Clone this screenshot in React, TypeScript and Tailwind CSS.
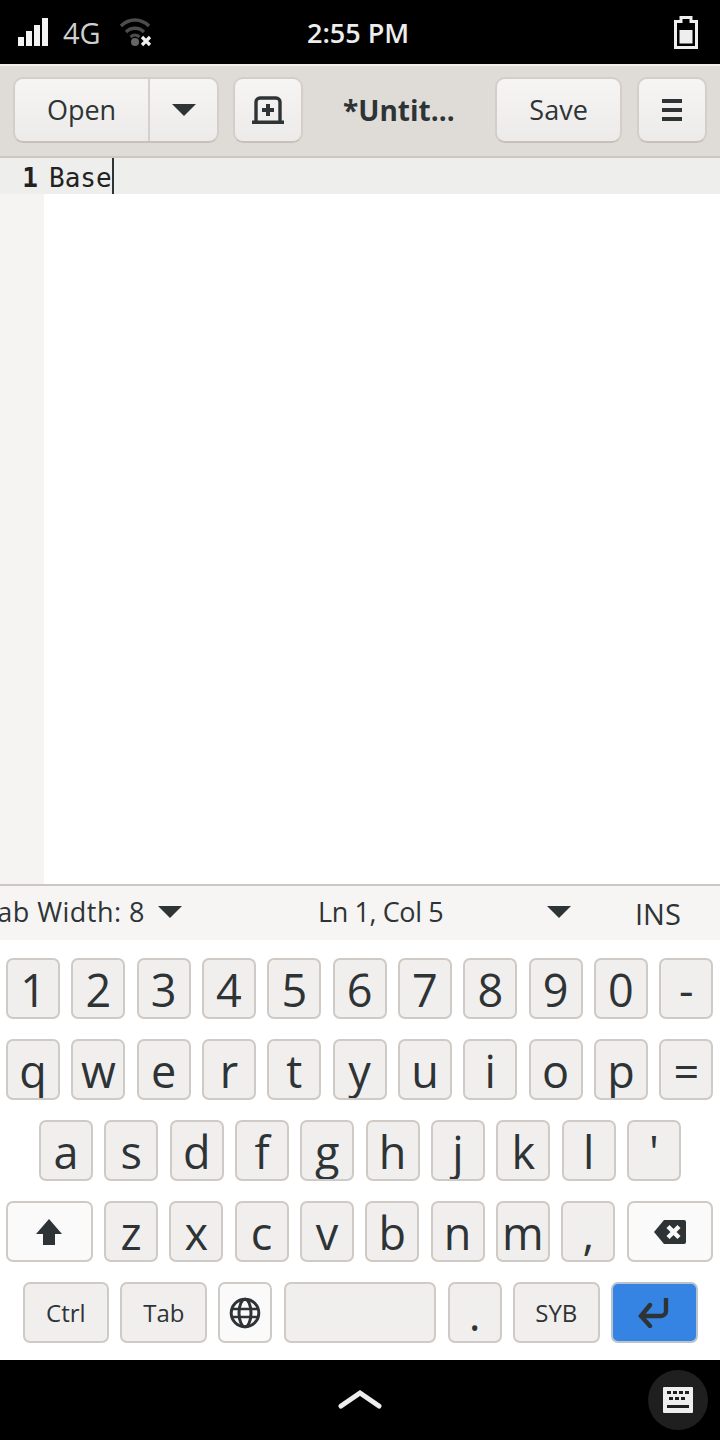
import React from "react";

const keyBase =
  "flex h-[61px] shrink-0 justify-center overflow-hidden rounded-[7px] border-2 text-[#2e3436]";
const plain = "border-[#cfcac5] bg-[#f1efee]";
const light = "border-[#cfcac5] bg-[#fafafa]";

function Key({ label, cls = "w-[54px]" }: { label?: string; cls?: string }) {
  return (
    <div className={`${keyBase} ${plain} ${cls} items-start text-[45px] leading-[60px]`}>
      {label}
    </div>
  );
}

function Row({ keys }: { keys: string[] }) {
  return (
    <>
      {keys.map((k) => (
        <Key key={k} label={k} />
      ))}
    </>
  );
}

function Arrow() {
  return (
    <svg width="24" height="14" viewBox="0 0 24 14">
      <path d="M0 1h24L12 13z" fill="#2e3436" />
    </svg>
  );
}

function HeaderButton({ children, cls = "" }: { children: React.ReactNode; cls?: string }) {
  return (
    <div
      className={`flex h-[66px] items-center rounded-[10px] border-2 border-[#d3cec9] border-b-[#c8c1bb] bg-gradient-to-b from-[#f6f5f4] to-[#ecebe9] text-[#2e3436] ${cls}`}
    >
      {children}
    </div>
  );
}

export default function App() {
  return (
    <div className="flex h-[1440px] w-[720px] flex-col overflow-hidden bg-white font-['Open_Sans',sans-serif]">
      {/* top bar */}
      <div className="flex h-[64px] shrink-0 items-center bg-black pl-[18px] pr-[22px] text-white">
        <svg width="30" height="28" viewBox="0 0 30 28" className="mt-[-1px]">
          <path d="M0 19h6v9H0zM8 13h6v15H8zM16 7h6v21h-6zM24 0h6v28h-6z" fill="#f3f3f3" />
        </svg>
        <span className="ml-[15px] w-[38px] text-[29px] leading-none text-[#cfcfcf]">4G</span>
        <svg width="32" height="30" viewBox="0 0 32 30" className="ml-[19px] mt-[2px]">
          <path d="M1 8C9 0 21 0 29 8" fill="none" stroke="#4c4c4c" strokeWidth="3.4" />
          <path d="M6 14c5-5 13-5 18 0" fill="none" stroke="#4c4c4c" strokeWidth="3.4" />
          <path d="M10.500 19c3-2.600 6-2.600 9 0" fill="none" stroke="#4c4c4c" strokeWidth="3" />
          <circle cx="15" cy="24" r="4" fill="#666" />
          <path d="M22 19l8 8M30 19l-8 8" stroke="#f0f0f0" strokeWidth="3.2" />
        </svg>
        <span className="ml-[155px] text-[27px] font-semibold leading-none text-[#ededed]">2:55 PM</span>
        <svg width="24" height="33" viewBox="0 0 24 33" className="ml-auto">
          <path
            d="M7 1.500h10v4h5.500v26h-21v-26H7z"
            fill="none"
            stroke="#eeeeee"
            strokeWidth="3"
          />
          <path d="M5.500 14h13v13.500h-13z" fill="#eeeeee" />
        </svg>
      </div>
      <div className="h-[2px] shrink-0 bg-[#f0efed]" />

      {/* header */}
      <div className="flex h-[92px] shrink-0 items-center border-b-2 border-[#cdc7c2] bg-[#dfdcd8] pb-[2px] pl-[13px] pr-[13px]">
        <HeaderButton cls="w-[207px]">
          <span className="flex h-full w-[135px] items-center justify-center border-r-2 border-[#d5d0cb] text-[27px]">
            Open
          </span>
          <span className="flex flex-1 items-center justify-center pb-[1px]">
            <Arrow />
          </span>
        </HeaderButton>
        <HeaderButton cls="ml-[14px] w-[70px] justify-center">
          <svg width="32" height="28" viewBox="0 0 32 28">
            <path d="M4 26V6a4 4 0 0 1 4-4h16a4 4 0 0 1 4 4v20" fill="none" stroke="#2e3436" strokeWidth="3.4" />
            <path d="M0 24.500h32V28H0z" fill="#2e3436" />
            <path d="M14 8h4v4h4v4h-4v4h-4v-4h-4v-4h4z" fill="#2e3436" />
          </svg>
        </HeaderButton>
        <div className="flex w-[193px] justify-center text-[28px] font-bold text-[#2e3436]">*Untit…</div>
        <HeaderButton cls="w-[128px] justify-center text-[27px]">Save</HeaderButton>
        <HeaderButton cls="ml-[15px] w-[70px] justify-center">
          <svg width="20" height="22" viewBox="0 0 20 22">
            <path d="M0 0h20v4H0zM0 9h20v4H0zM0 18h20v4H0z" fill="#2e3436" />
          </svg>
        </HeaderButton>
      </div>

      {/* editor */}
      <div className="flex min-h-0 flex-1 flex-col bg-white font-['DejaVu_Sans_Mono',monospace] text-[26px] text-[#222]">
        <div className="flex h-[36px] shrink-0 bg-[#eeeeec] leading-[40px]">
          <span className="w-[44px] pr-[6px] text-right font-bold">1</span>
          <span className="pl-[5px]">Base</span>
          <span className="h-full w-[2px] bg-[#2e3436]" />
        </div>
        <div className="flex-1">
          <div className="h-full w-[44px] bg-[#f5f4f2]" />
        </div>
      </div>

      {/* status */}
      <div className="flex h-[56px] shrink-0 items-center overflow-hidden whitespace-nowrap border-t-2 border-[#cdc7c2] bg-[#f6f5f4] pb-[3px] text-[27px] leading-none text-[#2e3436]">
        <span className="ml-[-18px] w-[176px] shrink-0 tracking-[0.45px]">Tab Width: 8</span>
        <Arrow />
        <span className="ml-[136px] w-[229px] shrink-0 tracking-[-0.4px]">Ln 1, Col 5</span>
        <Arrow />
        <span className="ml-[64px] mt-[3px] text-[29px]">INS</span>
      </div>

      {/* keyboard */}
      <div className="flex h-[420px] shrink-0 flex-col gap-[20px] bg-white pt-[18px]">
        <div className="flex gap-[11.33px] pl-[6px]">
          <Row keys={["1", "2", "3", "4", "5", "6", "7", "8", "9", "0", "-"]} />
        </div>
        <div className="flex gap-[11.33px] pl-[6px]">
          <Row keys={["q", "w", "e", "r", "t", "y", "u", "i", "o", "p", "="]} />
        </div>
        <div className="flex gap-[11.33px] pl-[39px]">
          <Row keys={["a", "s", "d", "f", "g", "h", "j", "k", "l", "'"]} />
        </div>
        <div className="flex gap-[11.33px] pl-[6px]">
          <div className={`${keyBase} ${light} w-[86.67px] items-center`}>
            <svg width="26" height="26" viewBox="0 0 26 26">
              <path d="M13 0l13 15h-7v11H7V15H0z" fill="#2e3436" />
            </svg>
          </div>
          <Row keys={["z", "x", "c", "v", "b", "n", "m", ","]} />
          <div className={`${keyBase} ${light} w-[86.67px] items-center`}>
            <svg width="32" height="24" viewBox="0 0 32 24">
              <path d="M10 0h20a2 2 0 0 1 2 2v20a2 2 0 0 1-2 2H10L0 12z" fill="#2e3436" />
              <path d="M14 6.500l11 11M25 6.500l-11 11" stroke="#fafafa" strokeWidth="4.400" />
            </svg>
          </div>
        </div>
        <div className="flex gap-[11.33px] pl-[22.5px]">
          <div className={`${keyBase} ${plain} w-[86.67px] items-center text-[24px]`}>Ctrl</div>
          <div className={`${keyBase} ${plain} w-[86.67px] items-center text-[24px]`}>Tab</div>
          <div className={`${keyBase} ${light} w-[54px] items-center`}>
            <svg width="32" height="32" viewBox="0 0 32 32">
              <g fill="none" stroke="#2e3436" strokeWidth="3">
                <circle cx="16" cy="16" r="13.800" />
                <ellipse cx="16" cy="16" rx="6" ry="13.800" />
                <path d="M2 12h28M2 20h28" strokeWidth="2.600" />
              </g>
            </svg>
          </div>
          <Key cls="w-[152.5px]" />
          <Key label="." />
          <div className={`${keyBase} ${plain} w-[86.67px] items-center text-[24px]`}>SYB</div>
          <div className={`${keyBase} w-[86.67px] items-center border-[#b9c3d0] bg-[#3584e4]`}>
            <svg width="32" height="30" viewBox="0 0 32 30">
              <path d="M28 1v12a5 5 0 0 1-5 5H4" fill="none" stroke="#2e3436" strokeWidth="4.400" strokeLinecap="square" />
              <path d="M12 7L3 18l9 10" fill="none" stroke="#2e3436" strokeWidth="4.400" strokeLinecap="round" />
            </svg>
          </div>
        </div>
      </div>

      {/* bottom bar */}
      <div className="relative flex h-[80px] shrink-0 items-center justify-center bg-black">
        <svg width="44" height="20" viewBox="0 0 44 20" className="mt-[-3px]">
          <path d="M3 17L22 4l19 13" fill="none" stroke="#eeeeee" strokeWidth="5" strokeLinecap="round" />
        </svg>
        <div className="absolute right-[12px] top-[10px] flex h-[60px] w-[60px] items-center justify-center rounded-full bg-[#1f1f1f]">
          <svg width="30" height="26" viewBox="0 0 30 26">
            <path
              fillRule="evenodd"
              d="M1 0h28a1 1 0 0 1 1 1v24a1 1 0 0 1-1 1H1a1 1 0 0 1-1-1V1a1 1 0 0 1 1-1zM4 4v3h4V4zm6 0v3h4V4zm6 0v3h4V4zm6 0v3h4V4zM6 10v3h4v-3zm6 0v3h4v-3zm6 0v3h4v-3zM4 18v3h22v-3z"
              fill="#eeeeee"
            />
          </svg>
        </div>
      </div>
    </div>
  );
}
